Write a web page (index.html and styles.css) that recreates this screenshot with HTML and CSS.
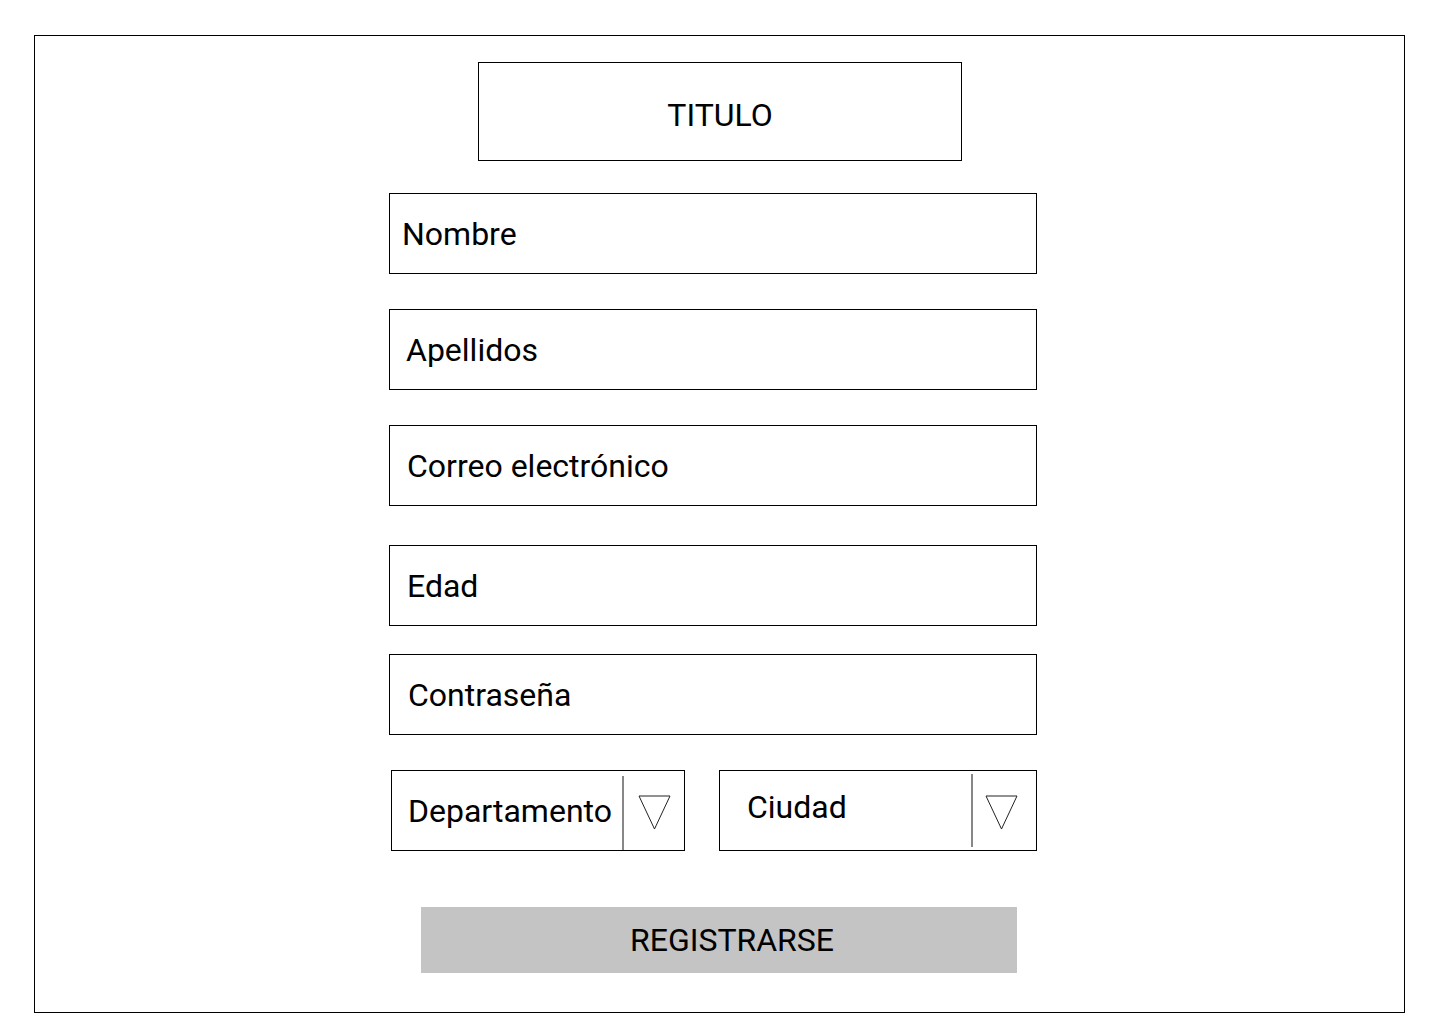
FILE: index.html
```html
<!DOCTYPE html>
<html lang="es">
<head>
<meta charset="utf-8">
<title>Registro</title>
<link rel="stylesheet" href="styles.css">
</head>
<body>
<div class="frame">
  <div class="title">TITULO</div>
  <div class="field f-nombre"><span class="lbl l-nombre">Nombre</span></div>
  <div class="field f-apellidos"><span class="lbl">Apellidos</span></div>
  <div class="field f-correo"><span class="lbl">Correo electrónico</span></div>
  <div class="field f-edad"><span class="lbl">Edad</span></div>
  <div class="field f-pass"><span class="lbl">Contraseña</span></div>
  <div class="selects">
    <div class="select s-dep">
      <span class="sel-lbl">Departamento</span>
      <span class="divider"></span>
      <span class="arrow"><svg width="33" height="35" viewBox="0 0 33 35"><polygon points="1,1 32,1 16.5,34" fill="none" stroke="#222" stroke-width="1"/></svg></span>
    </div>
    <div class="select s-city">
      <span class="sel-lbl city-lbl">Ciudad</span>
      <span class="divider d-city"></span>
      <span class="arrow a-city"><svg width="33" height="35" viewBox="0 0 33 35"><polygon points="1,1 32,1 16.5,34" fill="none" stroke="#222" stroke-width="1"/></svg></span>
    </div>
  </div>
  <div class="btn">REGISTRARSE</div>
</div>
</body>
</html>
```

FILE: styles.css
```css
* { box-sizing: border-box; }
html, body { margin: 0; padding: 0; background: #fff; }
body {
  font-family: Roboto, "Liberation Sans", sans-serif;
  color: #000;
  width: 1440px;
  height: 1024px;
}
.frame {
  margin: 35px 0 0 34px;
  width: 1371px;
  height: 978px;
  border: 1px solid #000;
  padding-top: 26px;
  display: flex;
  flex-direction: column;
  align-items: flex-start;
}
.title {
  margin-left: 443px;
  width: 484px;
  height: 99px;
  border: 1px solid #000;
  display: flex;
  align-items: center;
  justify-content: center;
  font-size: 32px;
  padding-top: 6px;
}
.field {
  margin-left: 354px;
  width: 648px;
  height: 81px;
  border: 1px solid #000;
  display: flex;
  align-items: center;
  padding-left: 16px;
  font-size: 32px;
}
.f-nombre { margin-top: 32px; padding-left: 12px; }
.f-apellidos { margin-top: 35px; }
.f-correo { margin-top: 35px; padding-left: 17px; }
.f-edad { margin-top: 39px; padding-left: 17px; }
.f-pass { margin-top: 28px; padding-left: 18px; }
.selects {
  margin-top: 35px;
  margin-left: 356px;
  display: flex;
  gap: 34px;
}
.select {
  height: 81px;
  border: 1px solid #000;
  display: flex;
  align-items: stretch;
  font-size: 32px;
}
.s-dep { width: 294px; padding-left: 16px; }
.s-city { width: 318px; padding-left: 27px; }
.sel-lbl {
  flex: 1;
  display: flex;
  align-items: center;
}
.city-lbl { padding-bottom: 7px; }
.divider {
  width: 2px;
  background: #888;
  margin-top: 5px;
}
.d-city { margin-top: 3px; margin-bottom: 3px; }
.arrow {
  width: 60px;
  display: flex;
  align-items: center;
  justify-content: center;
  padding-top: 4px;
}
.a-city { width: 63px; padding-right: 6px; }
.arrow svg { display: block; }
.btn {
  margin-top: 56px;
  margin-left: 386px;
  width: 596px;
  height: 66px;
  background: #c4c4c4;
  display: flex;
  align-items: center;
  justify-content: center;
  font-size: 32px;
  padding-left: 26px;
}
```
